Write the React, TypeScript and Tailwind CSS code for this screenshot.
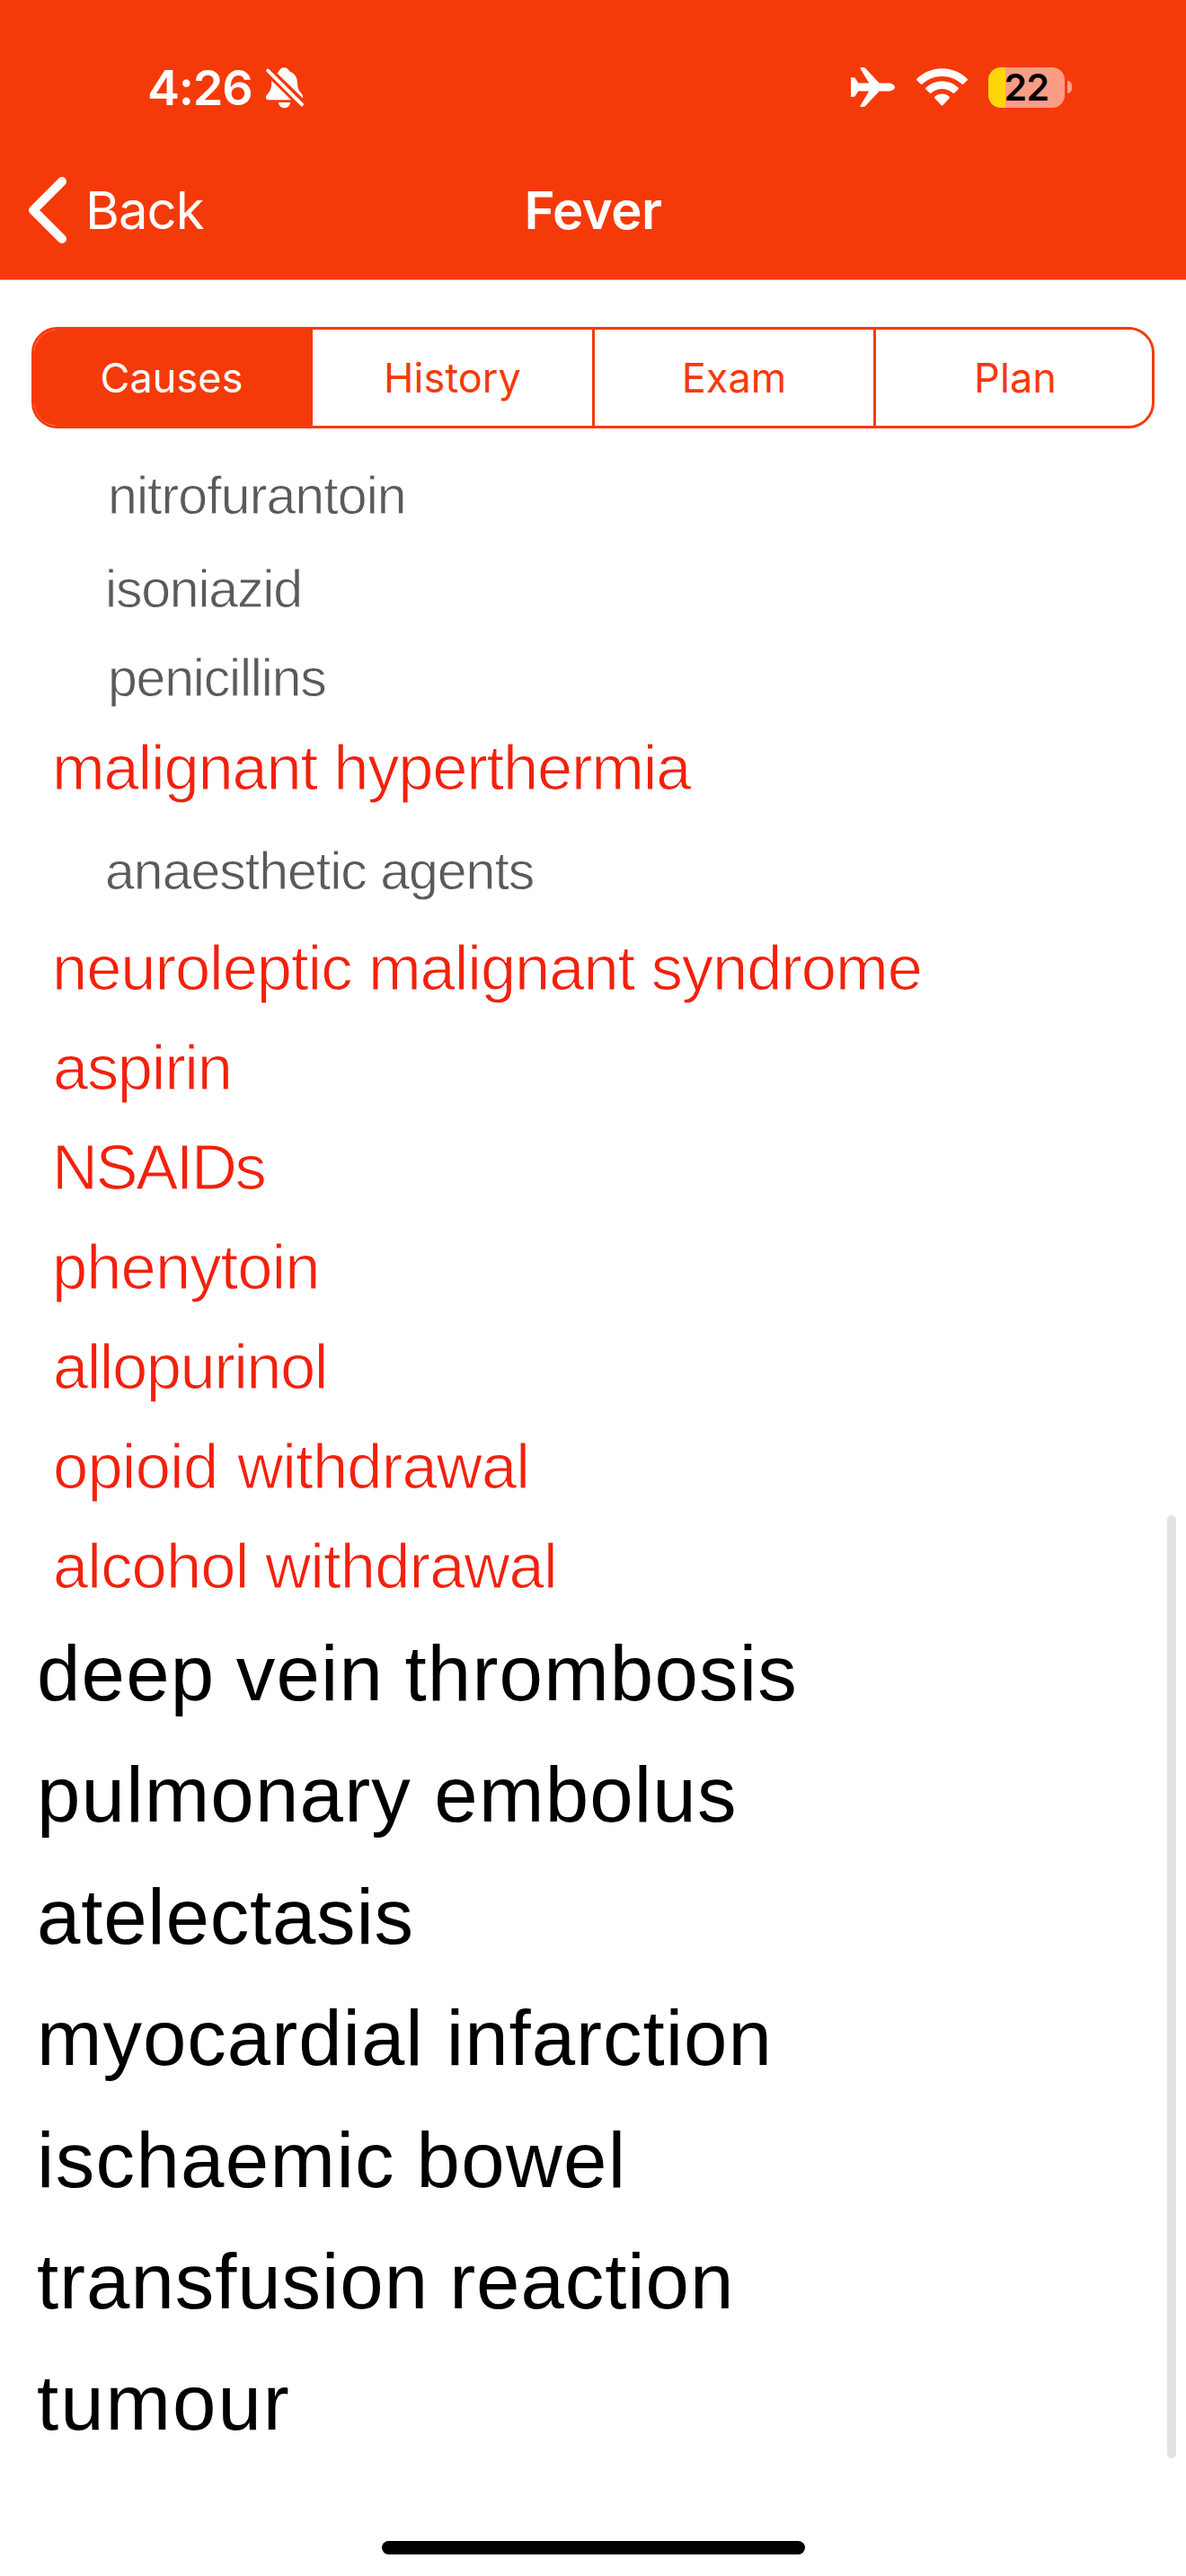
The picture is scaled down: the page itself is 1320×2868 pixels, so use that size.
type Row = { text: string; className: string };

const minor =
  "h-[100px] text-[59px] leading-[100px] text-[#5a5a5a] [-webkit-text-stroke:0.8px_white]";
const medium =
  "h-[111px] text-[70.5px] leading-[111px] text-[#f2210c] [-webkit-text-stroke:1.1px_white]";
const major = "h-[135.4px] text-[87px] leading-[135.4px] text-black";

const rows: Row[] = [
  { text: "nitrofurantoin", className: `${minor} pl-[120px] tracking-[-0.9px]` },
  { text: "isoniazid", className: `${minor} mt-[4px] pl-[117px] tracking-[-1.2px]` },
  { text: "penicillins", className: `${minor} mt-[-1px] pl-[120px] tracking-[-1.2px]` },
  { text: "malignant hyperthermia", className: `${medium} mt-[-6px] pl-[58px] tracking-[-1.2px]` },
  { text: "anaesthetic agents", className: `${minor} mt-[10px] pl-[117px] tracking-[-1px]` },
  { text: "neuroleptic malignant syndrome", className: `${medium} mt-[2px] pl-[58px] tracking-[-1.05px]` },
  { text: "aspirin", className: `${medium} pl-[59px] tracking-[-1.3px]` },
  { text: "NSAIDs", className: `${medium} pl-[58px] tracking-[-2.4px]` },
  { text: "phenytoin", className: `${medium} pl-[58px] tracking-[-0.9px]` },
  { text: "allopurinol", className: `${medium} pl-[59px] tracking-[-1.5px]` },
  { text: "opioid withdrawal", className: `${medium} pl-[59px] tracking-[-0.8px] [word-spacing:3px]` },
  { text: "alcohol withdrawal", className: `${medium} pl-[59px] tracking-[-0.85px]` },
  { text: "deep vein thrombosis", className: `${major} mt-[-4px] pl-[41px] tracking-[1.2px] [word-spacing:-2px]` },
  { text: "pulmonary embolus", className: `${major} pl-[41px] tracking-[1.2px]` },
  { text: "atelectasis", className: `${major} pl-[41px] tracking-[0.8px]` },
  { text: "myocardial infarction", className: `${major} pl-[41px] tracking-[1px]` },
  { text: "ischaemic bowel", className: `${major} pl-[41px] tracking-[1.35px] [word-spacing:-2px]` },
  { text: "transfusion reaction", className: `${major} pl-[41px] tracking-[0.95px] [word-spacing:-2px]` },
  { text: "tumour", className: `${major} pl-[41px] tracking-[2px]` },
];

const tabs = [
  { label: "Causes", className: "w-[310px] bg-[#f53a0a] pr-[4px] text-white" },
  { label: "History", className: "w-[314px] border-r-[3px] border-[#f53a0a] text-[#f53a0a]" },
  { label: "Exam", className: "w-[313px] border-r-[3px] border-[#f53a0a] text-[#f53a0a]" },
  { label: "Plan", className: "flex-1 pl-[3px] text-[#f53a0a]" },
];

function BellSlash() {
  return (
    <svg className="ml-[15px] h-[46px] w-[42px]" viewBox="0 0 42 46" fill="white">
      <path d="M12.4 6.4C13.4 5.8 13.9 5.4 14.3 4.6C15.3 1.8 17.4 0.2 20.3 0.2C23.2 0.2 25.4 1.8 26.3 4.6C31.7 6.6 34.7 10.7 35 17C35.2 23 36.4 25.8 38.8 28.2C40.8 30.2 41.6 32 40.9 34.3Z" />
      <path d="M6.3 14.8L28.2 36.3H3.2C1.1 36.3 0 35.2 0 33.4C0 31.2 1.2 30.2 2.9 28.4C5.7 25.4 6.2 21 6.3 14.8Z" />
      <path d="M13.8 39H27.2C26.7 42.7 24 45.2 20.5 45.2C17 45.2 14.3 42.7 13.8 39Z" />
      <path d="M2.2 3.6L40 41.4" stroke="#f53a0a" strokeWidth="7.6" strokeLinecap="round" />
      <path d="M2.2 3.6L40 41.4" stroke="white" strokeWidth="3.8" strokeLinecap="round" />
    </svg>
  );
}

function Airplane() {
  return (
    <svg className="h-[44px] w-[49px]" viewBox="0 0 49 44" fill="white">
      <path d="M0 11.2H3.2Q4.2 11.2 4.8 12L8.2 17.4H20.2L10.6 1.6Q9.8 0 11.6 0H14Q15.2 0 16.2 1.1L31.6 17.4H41.5C45.5 17.4 49 19.6 49 22S45.5 26.6 41.5 26.6H31.6L16.2 42.9Q15.2 44 14 44H11.6Q9.8 44 10.6 42.4L20.2 26.6H8.2L4.8 32Q4.2 32.8 3.2 32.8H0Z" />
    </svg>
  );
}

function Wifi() {
  return (
    <svg className="ml-[24px] h-[42px] w-[57px]" viewBox="0 0 57 42" fill="white">
      <path d="M0.6 11.4C8 4.2 17.8 0.2 28.5 0.2S49 4.2 56.4 11.4C57.1 12.1 57.1 12.8 56.5 13.4L52.4 17.5C51.8 18.1 51.1 18.1 50.5 17.5C44.6 12 36.9 8.9 28.5 8.9S12.4 12 6.5 17.5C5.9 18.1 5.2 18.1 4.6 17.5L0.5 13.4C-0.1 12.8 -0.1 12.1 0.6 11.4Z" />
      <path d="M10.6 21.4C15.4 16.8 21.7 14.4 28.5 14.4S41.6 16.8 46.4 21.4C47.1 22.1 47.1 22.8 46.5 23.4L42.3 27.5C41.7 28.1 41 28.1 40.3 27.5C37.1 24.7 33 23.1 28.5 23.1S19.9 24.7 16.7 27.5C16 28.1 15.3 28.1 14.7 27.5L10.5 23.4C9.9 22.8 9.9 22.1 10.6 21.4Z" />
      <path d="M20.6 31.4C22.8 29.6 25.5 28.6 28.5 28.6S34.2 29.6 36.4 31.4C37.1 32 37.1 32.8 36.5 33.4L29.5 40.9C28.9 41.6 28.1 41.6 27.5 40.9L20.5 33.4C19.9 32.8 19.9 32 20.6 31.4Z" />
    </svg>
  );
}

function Battery() {
  return (
    <div className="ml-[23px] flex items-center">
      <div className="flex h-[45px] w-[85px] items-center justify-center rounded-[14px] bg-linear-to-r from-[#ffd60a] from-[19px] to-[#fb9d85] to-[19px] text-[41px] leading-none font-semibold tracking-[-0.5px] text-black">
        22
      </div>
      <div className="ml-[3px] h-[14px] w-[5px] rounded-r-full bg-[#fb9d85]" />
    </div>
  );
}

function StatusBar() {
  return (
    <div className="flex h-[196px] items-start justify-between pt-[74px] pr-[127px] pl-[164px] text-white">
      <div className="flex h-[48px] items-center">
        <span className="text-[54px] leading-none font-semibold tracking-[-1.2px]">4:26</span>
        <BellSlash />
      </div>
      <div className="flex h-[46px] items-center">
        <Airplane />
        <Wifi />
        <Battery />
      </div>
    </div>
  );
}

function NavBar() {
  return (
    <div className="grid h-[76px] grid-cols-3 items-center text-white">
      <button className="flex items-center pl-[31px]">
        <svg className="h-[76px] w-[44px]" viewBox="0 0 44 76" fill="none">
          <path d="M38 6L6 38L38 70" stroke="white" strokeWidth="10" strokeLinecap="round" strokeLinejoin="round" />
        </svg>
        <span className="ml-[20px] text-[58px] leading-none tracking-[-1px]">Back</span>
      </button>
      <h1 className="text-center text-[58px] leading-none font-semibold tracking-[-0.5px]">Fever</h1>
    </div>
  );
}

function SegmentedControl() {
  return (
    <div className="mx-[35px] mt-[52px] flex h-[113px] overflow-hidden rounded-[29px] border-[3px] border-[#f53a0a] text-[45px] tracking-[0.1px]">
      {tabs.map((tab) => (
        <button key={tab.label} className={tab.className}>
          {tab.label}
        </button>
      ))}
    </div>
  );
}

export default function App() {
  return (
    <div className="relative flex h-[2868px] w-[1320px] flex-col overflow-hidden bg-white font-[Inter,sans-serif]">
      <header className="h-[312px] shrink-0 border-b border-[#b9b1ae] bg-[#f53a0a]">
        <StatusBar />
        <NavBar />
      </header>
      <SegmentedControl />
      <ul className="mt-[25px] flex flex-col font-['Liberation_Sans',sans-serif] whitespace-nowrap">
        {rows.map((row) => (
          <li key={row.text} className={row.className}>
            {row.text}
          </li>
        ))}
      </ul>
      <div className="absolute top-[1687px] right-[11px] h-[1050px] w-[10px] rounded-full bg-[#e3e3e3]" />
      <div className="absolute bottom-[24px] left-[425px] h-[15px] w-[471px] rounded-full bg-black" />
    </div>
  );
}
